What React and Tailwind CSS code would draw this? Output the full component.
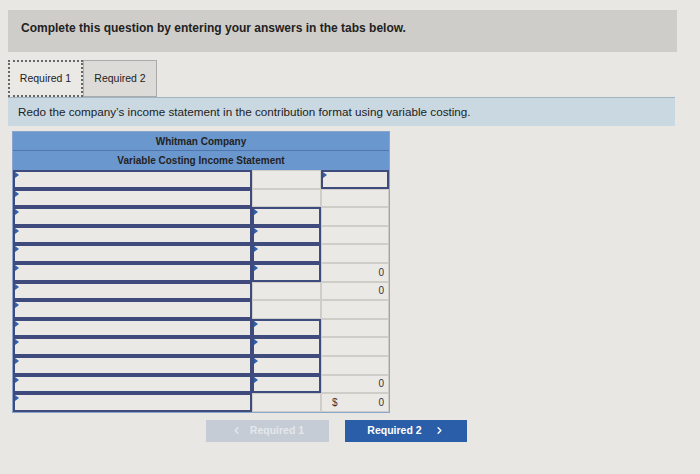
import { ChevronLeft, ChevronRight } from 'lucide-react'

// b = bordered input, p = plain cell
const rows = [
  ['b', 'p', 'b', ''],
  ['b', 'p', 'p', ''],
  ['b', 'b', 'p', ''],
  ['b', 'b', 'p', ''],
  ['b', 'b', 'p', ''],
  ['b', 'b', 'p', '0'],
  ['b', 'p', 'p', '0'],
  ['b', 'p', 'p', ''],
  ['b', 'b', 'p', ''],
  ['b', 'b', 'p', ''],
  ['b', 'b', 'p', ''],
  ['b', 'b', 'p', '0'],
  ['b', 'p', 'p', '$0'],
]

function Cell({ kind, value }) {
  if (kind === 'b') {
    return (
      <div className="relative h-full border-2 border-[#3f4b7d] bg-[#ebe9e5]">
        <span className="absolute left-0 top-0 h-0 w-0 border-y-[3px] border-l-[4px] border-y-transparent border-l-[#2e5fb0]" />
      </div>
    )
  }
  const dollar = value.startsWith('$')
  return (
    <div className="flex h-full items-center justify-between border border-[#cfcdc8] bg-[#ebe9e5] pl-[10px] pr-1 text-[10px] text-[#333]">
      <span>{dollar ? '$' : ''}</span>
      <span>{dollar ? value.slice(1) : value}</span>
    </div>
  )
}

export default function App() {
  return (
    <div className="h-[474px] w-[700px] bg-[#e9e7e3] px-2 pt-[10px] font-['Liberation_Sans',Arial,sans-serif] text-[#222]">
      <div className="h-[42px] w-[669px] bg-[#cfcdc9] pl-[13px] pt-[9px] text-[12px] font-bold">
        Complete this question by entering your answers in the tabs below.
      </div>

      <div className="mt-2 flex">
        <div className="flex h-[37px] w-[75px] items-center justify-center border-2 border-dotted border-[#666] bg-[#ebe9e5] text-[10.5px]">
          Required 1
        </div>
        <div className="flex h-[37px] w-[74px] items-center justify-center border border-[#aaa] bg-[#dddbd7] text-[10.5px]">
          Required 2
        </div>
      </div>

      <div className="flex h-[29px] w-[667px] items-center border-t border-[#9fb3c0] bg-[#c9d8e1] pl-[10px] text-[11.7px]">
        Redo the company&rsquo;s income statement in the contribution format using variable costing.
      </div>

      <div className="ml-1 mt-[5px] w-[378px] border border-[#8aa6cc]">
        <div className="flex h-[19px] items-center justify-center border-b border-[#4f77ad] bg-[#6b97cf] text-[10px] font-bold">
          Whitman Company
        </div>
        <div className="flex h-[19px] items-center justify-center bg-[#6b97cf] text-[10px] font-bold">
          Variable Costing Income Statement
        </div>
        <div className="flex flex-col">
          {rows.map((r, i) => (
            <div key={i} className="grid h-[18.6px] grid-cols-[239px_69px_1fr]">
              <Cell kind={r[0]} value="" />
              <Cell kind={r[1]} value="" />
              <Cell kind={r[2]} value={r[3]} />
            </div>
          ))}
        </div>
      </div>

      <div className="mt-[7px] flex gap-4 pl-[198px]">
        <button className="flex h-[22px] w-[123px] items-center justify-center gap-2 bg-[#c6ccd5] text-[10.5px] font-bold text-[#e4e7ec]">
          <ChevronLeft size={11} strokeWidth={3} />
          Required 1
        </button>
        <button className="flex h-[22px] w-[122px] items-center justify-center gap-3 bg-[#2b5ea9] text-[10.5px] font-bold text-white">
          Required 2
          <ChevronRight size={11} strokeWidth={3} />
        </button>
      </div>
    </div>
  )
}
